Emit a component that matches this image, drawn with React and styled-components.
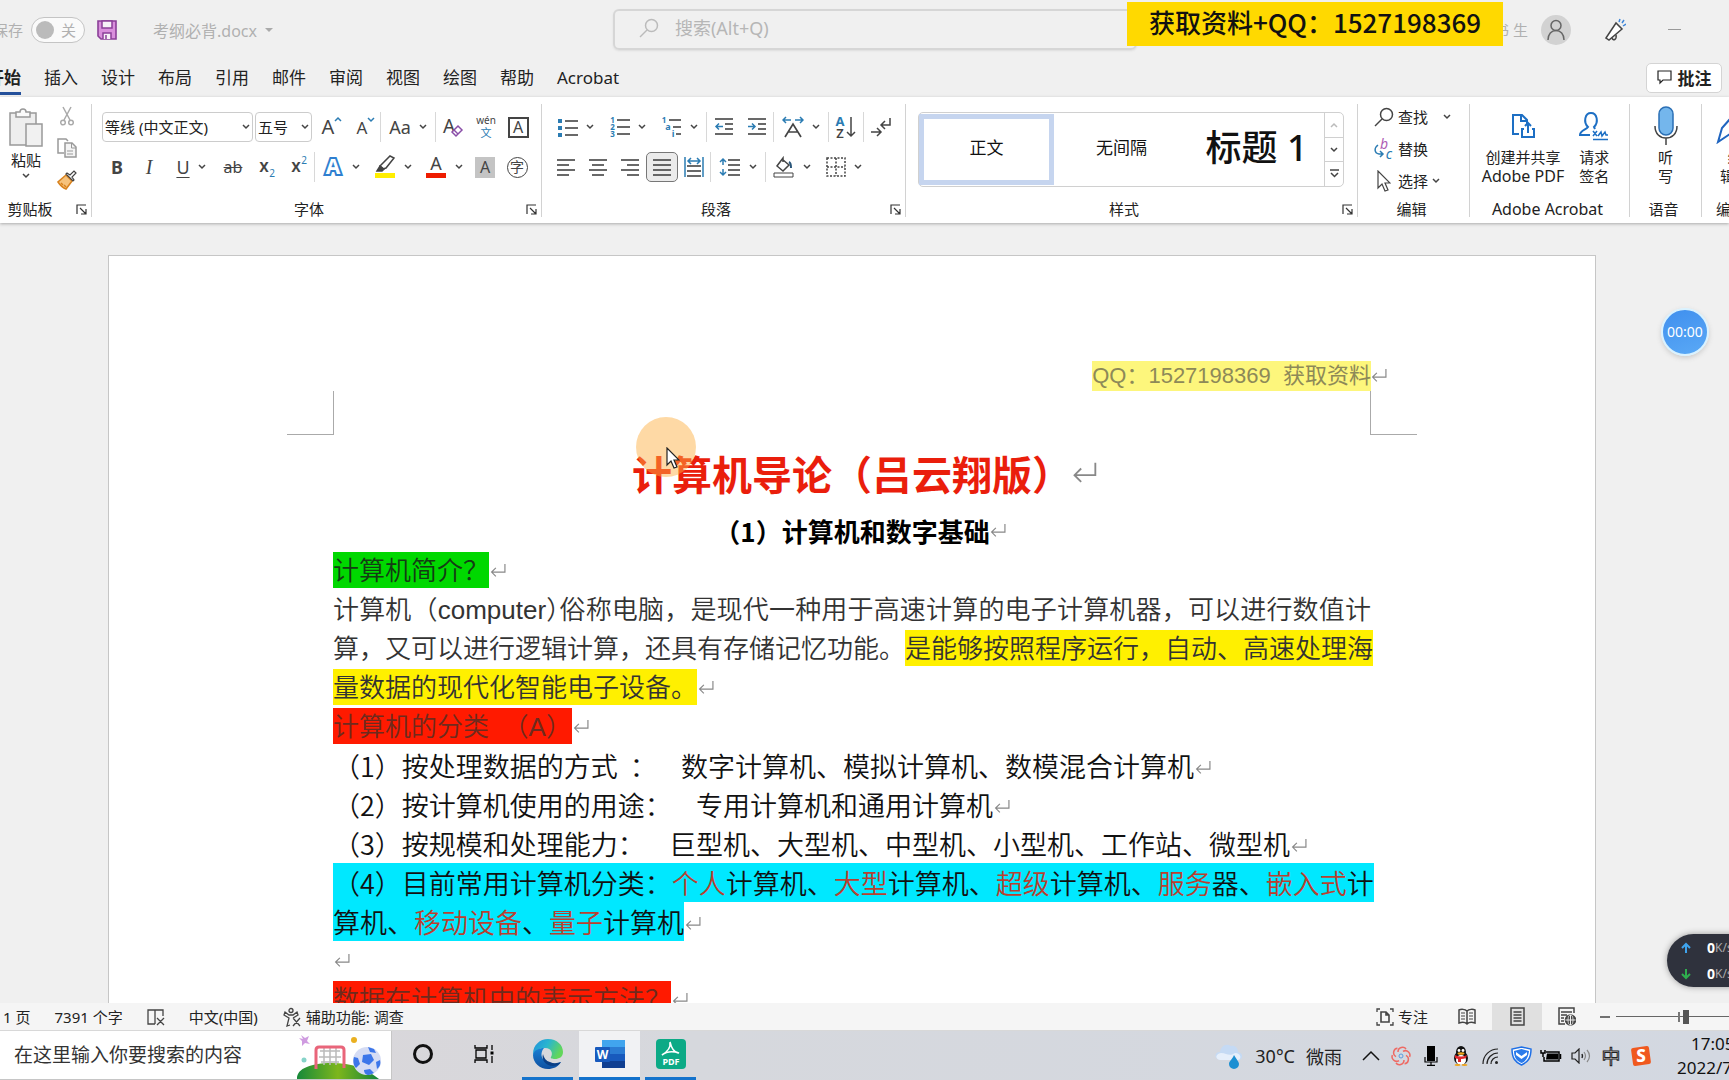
import styled, { createGlobalStyle, css } from "styled-components";

const UI_FONT = '"Noto Sans", "Noto Sans CJK SC", sans-serif';
const CJK_FONT = '"Noto Sans CJK SC", "Noto Sans", sans-serif';
const BLUE = "#2b7cb3";
const INK = "#444";

/* ---------- icons ---------- */

const Svg = ({ w = 20, h = 20, children }) => (
  <svg width={w} height={h} viewBox={`0 0 ${w} ${h}`} fill="none" stroke={INK} strokeWidth="1.5" aria-hidden="true">
    {children}
  </svg>
);

const Glyph = ({ x, y, size, fill = INK, weight = 400, children }) => (
  <text x={x} y={y} fontSize={size} fill={fill} stroke="none" fontWeight={weight} textAnchor="middle"
    fontFamily={UI_FONT}>{children}</text>
);

const Chevron = ({ up, color = INK }) => (
  <svg width="8" height="6" viewBox="0 0 8 6" fill="none" stroke={color} strokeWidth="1.5" aria-hidden="true">
    <path d={up ? "M1 5l3-3 3 3" : "M1 1l3 3 3-3"} />
  </svg>
);

const Enter = ({ big }) => (
  <svg width={big ? 25 : 16} height={big ? 25 : 16} viewBox="0 0 15 15" fill="none" stroke="#888" strokeWidth="1.1" aria-hidden="true">
    <path d="M14 1v7.5H1.5M5.5 4.5l-4 4 4 4" />
  </svg>
);

const SaveIcon = () => (
  <Svg w={20} h={20}>
    <path d="M1 1h18v18H4l-3-3z" fill="#d98fdc" stroke="#8a3f98" strokeWidth="1.6" />
    <path d="M5 1h10v7H5z" fill="#f6f0f7" stroke="#8a3f98" />
    <path d="M6 19v-6h8v6" fill="#f6f0f7" stroke="#8a3f98" />
    <path d="M9 15v4" stroke="#8a3f98" />
  </Svg>
);

const SearchIcon = ({ color = INK }) => (
  <Svg w={20} h={20}>
    <circle cx="12.5" cy="7.5" r="6" stroke={color} />
    <path d="M8 12l-7 7" stroke={color} />
  </Svg>
);

const PersonIcon = () => (
  <Svg w={20} h={22}>
    <circle cx="10" cy="6.5" r="5" stroke="#666" />
    <path d="M2 21c0-6 3.5-9.5 8-9.5s8 3.500 8 9.500" stroke="#666" />
  </Svg>
);

const MegaphoneIcon = () => (
  <Svg w={22} h={24}>
    <path d="M2 20L12 5l6 6-13 11-3-2z" fill="#fff" />
    <path d="M8 20c1 3 5 2 4-3" />
    <path d="M15 4l1-3M18 5l2-3M19 8l3-2" stroke="#3f86d8" />
  </Svg>
);

const CommentIcon = () => (
  <Svg w={15} h={15}><path d="M1 1h13v9H6l-3 3v-3H1z" stroke="#222" strokeWidth="1.2" /></Svg>
);

const PasteIcon = () => (
  <Svg w={36} h={40}>
    <path d="M2 6h26v32H2z" fill="#eee" stroke="#999" />
    <path d="M8 10V5h4c0-4 6-4 6 0h4v5z" fill="#fafafa" stroke="#999" />
    <path d="M18 17h16v22H18z" fill="#f1f1f1" stroke="#999" />
  </Svg>
);

const CutIcon = () => (
  <Svg w={14} h={20}>
    <path d="M3 1l7 13M11 1L4 14" stroke="#aaa" />
    <circle cx="3" cy="16.5" r="2.3" stroke="#aaa" />
    <circle cx="11" cy="16.5" r="2.3" stroke="#aaa" />
  </Svg>
);

const CopyIcon = () => (
  <Svg w={20} h={20}>
    <path d="M7 15H1V1h8l2 2" stroke="#999" />
    <path d="M8 5h7l4 4v10H8z" fill="#f4f4f4" stroke="#999" />
    <path d="M14.5 5v5H19M10 13h6M10 16h6" stroke="#999" strokeWidth="1" />
  </Svg>
);

const BrushIcon = () => (
  <Svg w={20} h={20}>
    <path d="M9 5L1 12c2 3 5 6 8 7l6-8z" fill="#f6c27c" stroke="#d8821e" />
    <path d="M4 13l2 2M7 15l2 2" stroke="#d8821e" />
    <path d="M9 4l7 7 1-1-2-3 4-4-2-2-4 4-3-2z" fill="#fff" stroke="#444" strokeWidth="1.2" />
  </Svg>
);

const Lines = ({ rows, stroke = INK }) => (
  <>{rows.map(([x1, x2, y]) => <path key={y} d={`M${x1} ${y}H${x2}`} stroke={stroke} strokeWidth="1.6" />)}</>
);

const BulletsIcon = () => (
  <Svg>
    {[2, 9, 16].map((y) => <rect key={y} x="0" y={y} width="4" height="4" fill={BLUE} stroke="none" />)}
    <Lines rows={[[7, 20, 4], [7, 20, 11], [7, 20, 18]]} />
  </Svg>
);

const NumberIcon = () => (
  <Svg>
    {[1, 2, 3].map((n) => <Glyph key={n} x={2.5} y={n * 7 - 1} size={8} fill={BLUE} weight={700}>{n}</Glyph>)}
    <Lines rows={[[7, 20, 3], [7, 20, 10], [7, 20, 17]]} />
  </Svg>
);

const MultiIcon = () => (
  <Svg w={20} h={22}>
    <Glyph x={2} y={7} size={8} fill={BLUE} weight={700}>1</Glyph>
    <Glyph x={6} y={14} size={9} fill={BLUE} weight={700}>a</Glyph>
    <Glyph x={11} y={21} size={9} fill={BLUE} weight={700}>i</Glyph>
    <Lines rows={[[7, 19, 4], [11, 19, 11], [14, 19, 18]]} />
  </Svg>
);

const IndentIcon = ({ out }) => (
  <Svg>
    <Lines rows={[[1, 19, 2], [11, 19, 7], [11, 19, 12], [1, 19, 17]]} />
    <path d={out ? "M9 9.5H2M5 6.5l-3 3 3 3" : "M1 9.5h7M5 6.5l3 3-3 3"} stroke={BLUE} />
  </Svg>
);

const alignRows = {
  left: [[1, 19, 2], [1, 13, 7], [1, 19, 12], [1, 13, 17]],
  center: [[1, 19, 2], [4, 16, 7], [1, 19, 12], [4, 16, 17]],
  right: [[1, 19, 2], [7, 19, 7], [1, 19, 12], [7, 19, 17]],
  justify: [[1, 19, 2], [1, 19, 7], [1, 19, 12], [1, 19, 17]],
};

const AlignIcon = ({ kind }) => <Svg h={19}><Lines rows={alignRows[kind]} /></Svg>;

const DistributeIcon = () => (
  <Svg w={20} h={22}>
    <path d="M1 1v20M19 1v20M4 5h12M7 2L4 5l3 3M13 2l3 3-3 3" stroke={BLUE} />
    <Lines rows={[[3, 17, 10], [3, 17, 15], [3, 17, 20]]} />
  </Svg>
);

const SpacingIcon = () => (
  <Svg w={22} h={20}>
    <path d="M4 2v6M1 5l3-3 3 3M4 12v6M1 15l3 3 3-3" stroke={BLUE} />
    <Lines rows={[[9, 21, 3], [9, 21, 8], [9, 21, 13], [9, 21, 18]]} />
  </Svg>
);

const WidthIcon = () => (
  <Svg w={22} h={22}>
    <path d="M9 4H1M4 1L1 4l3 3M13 4h8M18 1l3 3-3 3" stroke={BLUE} />
    <path d="M3 21L11 8l8 13M6 16h10" strokeWidth="1.7" />
  </Svg>
);

const SortIcon = () => (
  <Svg w={22} h={24}>
    <Glyph x={5} y={11} size={13} fill={BLUE} weight={700}>A</Glyph>
    <Glyph x={5} y={23} size={13} weight={600}>Z</Glyph>
    <path d="M16 2v19M12 17l4 4 4-4" />
  </Svg>
);

const MarksIcon = () => (
  <Svg w={22} h={20}>
    <path d="M20 1v7h-8M15 4l-4 4 4 4M1 15h9M7 11l4 4-4 4" />
  </Svg>
);

const BucketIcon = () => (
  <Svg w={22} h={22}>
    <path d="M9 3l7 6-6 6-6-5 6-8v4" />
    <path d="M16 6c2 1 2 4 2 6" stroke="#2a567a" strokeWidth="2" />
    <path d="M1 17h19v4H1z" strokeWidth="1" />
  </Svg>
);

const BordersIcon = () => (
  <Svg><path d="M1 1h18v18H1zM10 1v18M1 10h18" strokeDasharray="2 1.5" /></Svg>
);

const PenIcon = () => (
  <Svg w={22} h={24}>
    <path d="M6 11L16 1l4 2-8 10-3 1z" />
    <path d="M3 16l3-5 4 3-2 2z" fill={INK} />
    <path d="M1 18h20v5H1z" fill="#ffee00" stroke="none" />
  </Svg>
);

const FontColorIcon = () => (
  <Svg w={22} h={24}>
    <Glyph x={11} y={15} size={18}>A</Glyph>
    <path d="M1 18h20v5H1z" fill="#ee1c00" stroke="none" />
  </Svg>
);

const ClearIcon = () => (
  <Svg w={22} h={24}>
    <Glyph x={7} y={18} size={19}>A</Glyph>
    <path d="M10 17l6-6 4 4-6 6z" fill="#fff" stroke="#8a4fa8" />
    <path d="M12 15l4 4" stroke="#8a4fa8" />
  </Svg>
);

const PinyinIcon = () => (
  <Svg w={22} h={24}>
    <Glyph x={11} y={9} size={10}>wén</Glyph>
    <Glyph x={11} y={22} size={11} fill={BLUE}>文</Glyph>
  </Svg>
);

const EffectIcon = () => (
  <Svg w={22} h={24}>
    <text x="11" y="19" fontSize="21" fontWeight="700" textAnchor="middle" fontFamily={UI_FONT}
      stroke="#2f7fd0" strokeWidth="4" fill="#fff" paintOrder="stroke">A</text>
  </Svg>
);

const ReplaceIcon = () => (
  <Svg w={20} h={22}>
    <Glyph x={10} y={11} size={14} fill="#b05fb5">b</Glyph>
    <Glyph x={15} y={21} size={14} fill={BLUE}>c</Glyph>
    <path d="M4 7c-4 3-4 8 1 9h3M6 13l3 3-3 3" stroke={BLUE} />
  </Svg>
);

const PointerIcon = ({ color = INK }) => (
  <Svg w={14} h={22}><path d="M1 1v17l4-4 3 7 3-1-3-7h5z" fill="#fff" stroke={color} strokeWidth="1.2" /></Svg>
);

const PdfShareIcon = () => (
  <Svg w={24} h={26}>
    <path d="M8 21H2V2h9l5 5v4M10 2v6h6" stroke="#1d6fc4" strokeWidth="2" />
    <path d="M13 16h-2v8h12v-8h-2M17 20v-9M14 13l3-3 3 3" stroke="#1d6fc4" strokeWidth="2" />
  </Svg>
);

const SignIcon = () => (
  <Svg w={30} h={30}>
    <path d="M11 24H1c0-5 6-5 8-8-5-5-3-14 3-14s8 9 3 14l1 2" stroke="#1d6fc4" strokeWidth="2" />
    <path d="M14 20l4 5M18 20l-4 5M19 25l3-4 1 4 3-4 1 3h2M14 28.5h15" stroke="#1d6fc4" strokeWidth="1.5" />
  </Svg>
);

const MicIcon = () => (
  <Svg w={24} h={40}>
    <rect x="5" y="1" width="14" height="28" rx="7" fill="#74b6ec" stroke="#2a6fb5" />
    <path d="M1 20c0 8 5 12 11 12s11-4 11-12M12 32v7" />
  </Svg>
);

const EditorIcon = () => (
  <Svg w={38} h={36}><path d="M2 34l4-14L22 2l6 4-14 20z" stroke="#2065c0" strokeWidth="2" /></Svg>
);

const LauncherIcon = () => (
  <Svg w={11} h={11}><path d="M1 10V1h9M4 4l6 6M10 5v5H5" stroke="#333" strokeWidth="1.2" /></Svg>
);

const ProofIcon = () => (
  <Svg w={18} h={18}>
    <path d="M8 16V2H1v14h7M8 2h8v6M16 2v6M10 10l7 7M17 10l-7 7" strokeWidth="1.3" />
  </Svg>
);

const AccessIcon = () => (
  <Svg w={20} h={20}>
    <circle cx="9" cy="3.5" r="2" strokeWidth="1.3" />
    <path d="M8 18l-3 1 2-8-5-3 1-3 4 3h4l4-3 1 3-5 3M11 11l7 8M18 11l-7 8" strokeWidth="1.3" />
  </Svg>
);

const FocusIcon = () => (
  <Svg w={18} h={18}>
    <path d="M4 1H1v3M14 1h3v3M4 17H1v-3M14 17h3v-3" strokeWidth="1.3" />
    <path d="M5 4h5l3 3v7H5zM10 4v3h3" strokeWidth="1.6" />
  </Svg>
);

const ReadIcon = () => (
  <Svg w={18} h={18}>
    <path d="M9 3v13M9 3C7 1 3 1 1 2v13c3-1 6-1 8 1 2-2 5-2 8-1V2c-2-1-6-1-8 1" />
    <path d="M3 5h4M3 8h4M3 11h4M11 5h4M11 8h4M11 11h4" strokeWidth="1.2" />
  </Svg>
);

const PrintIcon = () => (
  <Svg w={15} h={19}>
    <path d="M1 1h13v17H1z" />
    <path d="M3.500 5h8M3.500 8h8M3.500 11h8M3.500 14h8" strokeWidth="1.3" />
  </Svg>
);

const WebIcon = () => (
  <Svg w={18} h={19}>
    <path d="M7 17H1V1h15v5M3 5h11M3 8h6M3 11h3M3 14h3" />
    <circle cx="12.5" cy="13" r="5" fill="#444" />
    <path d="M7.5 13h10M12.5 8v10" stroke="#eee" strokeWidth="1" />
    <ellipse cx="12.5" cy="13" rx="2.5" ry="5" stroke="#eee" strokeWidth=".8" />
  </Svg>
);

const SoccerArt = () => (
  <svg width="98" height="48" viewBox="0 0 98 48" aria-hidden="true">
    <defs>
      <linearGradient id="hill"><stop offset="0" stopColor="#16893a" /><stop offset=".5" stopColor="#7db61c" /><stop offset="1" stopColor="#128338" /></linearGradient>
    </defs>
    <path d="M8 4l4 3 4-2-2 5 3 3-5-1-3 3v-5l-3-3 4 1z" fill="#cf9be0" />
    <circle cx="61" cy="9" r="3" fill="#eab020" />
    <circle cx="11" cy="29" r="2.5" fill="#86d3c9" />
    <path d="M4 48c-1-11 16-16 34-16 22 0 34 5 48 16z" fill="url(#hill)" />
    <path d="M27 20h20M26 26h22M28 31h18M31 17v17M37 17v17M43 17v17" stroke="#bbb" strokeWidth="1.5" />
    <path d="M23 38V19q0-3 3-3h22q3 0 3 3v18" fill="none" stroke="#e9657a" strokeWidth="3" />
    <circle cx="74" cy="30" r="14" fill="#d5dcf4" />
    <path d="M70 24l8-1 3 6-5 5-7-3zM61 26l4 1 2 6-4 4c-3-3-3-8-2-11zM75 16l6 2 2 4-6-1zM71 39l6-1 4 4-5 2c-3 0-5-2-5-5zM83 31l4-2c1 4 0 7-3 9z" fill="#3c76ea" />
  </svg>
);

const EdgeLogo = () => (
  <svg width="32" height="32" viewBox="0 0 32 32" aria-hidden="true">
    <defs>
      <linearGradient id="edgeTop" x1="0" y1="0" x2="1" y2=".4"><stop offset="0" stopColor="#1f8fdc" /><stop offset=".5" stopColor="#2ab5d0" /><stop offset="1" stopColor="#62d65b" /></linearGradient>
      <linearGradient id="edgeLow" x1="0" y1="0" x2="0" y2="1"><stop offset="0" stopColor="#1a7fd4" /><stop offset="1" stopColor="#0d4fa0" /></linearGradient>
    </defs>
    <path d="M1 16C1 7 8 1 16 1c9 0 15 6 15 13 0 5-4 7-8 7-3 0-5-1-4-2 2-3 1-9-6-9C7 10 2 13 1 18z" fill="url(#edgeTop)" />
    <path d="M1 17C2 12 7 10 12 10c-3 3-5 12 5 15 5 2 9 0 12-1-3 5-8 7-13 7C8 31 1 25 1 17z" fill="url(#edgeLow)" />
    <path d="M11 16c-2 6 3 12 10 12 3 0 6-1 8-4-3 1-7 2-11 0-4-1-6-4-7-8z" fill="#0a3f86" />
  </svg>
);

const WordLogo = () => (
  <svg width="30" height="30" viewBox="0 0 30 30" aria-hidden="true">
    <path d="M7 1h23v7H7z" fill="#41a5ee" />
    <path d="M7 8h23v7H7z" fill="#2b7cd3" />
    <path d="M7 15h23v7H7z" fill="#185abd" />
    <path d="M7 22h23v7H7z" fill="#103f91" />
    <rect x="0" y="8" width="15" height="15" rx="1" fill="#185abd" />
    <text x="7.5" y="20" fontSize="12" fontWeight="700" fill="#fff" textAnchor="middle" fontFamily={UI_FONT}>W</text>
  </svg>
);

const PdfLogo = () => (
  <svg width="30" height="30" viewBox="0 0 30 30" aria-hidden="true">
    <rect width="30" height="30" rx="4" fill="#0caa86" />
    <path d="M14 3c1 6-3 10-8 13 5-4 11-4 17-2-5 0-8-6-9-11z" fill="none" stroke="#fff" strokeWidth="1.6" />
    <text x="15" y="26" fontSize="9" fontWeight="700" fill="#fff" textAnchor="middle" fontFamily={UI_FONT}>PDF</text>
  </svg>
);

const TaskViewIcon = () => (
  <Svg w={20} h={20}>
    <path d="M1 1v3h12V1M1 19v-3h12v3M2 6h10v8H2zM18 1v5M18 12v7" stroke="#000" strokeWidth="1.3" />
    <path d="M16.5 7.5h3v3h-3z" fill="#000" stroke="none" />
  </Svg>
);

const WeatherIcon = () => (
  <svg width="30" height="30" viewBox="0 0 30 30" aria-hidden="true">
    <path d="M6 19c-6-1-6-8 0-8 1-6 6-9 11-6 4-1 7 2 7 6 6 1 5 8 0 8z" fill="#c5daf4" />
    <path d="M6 19c-5-1-5-6 1-7 6 0 8 4 14 0 6 0 7 6 3 7z" fill="#e6effb" />
    <path d="M20 14c3 5 5 7 5 9a5 5 0 0 1-10 0c0-3 3-4 5-9z" fill="#1c8fd2" />
  </svg>
);

const SwirlIcon = () => (
  <Svg w={20} h={20}>
    {[0, 60, 120, 180, 240, 300].map((a) => (
      <path key={a} d="M7 6c0-5 6-6 8-3" stroke="#ee6a64" transform={`rotate(${a} 10 10)`} />
    ))}
    <circle cx="10" cy="10" r="2" stroke="#5a9be0" strokeWidth="1" />
  </Svg>
);

const TrayMic = () => (
  <Svg w={14} h={20}>
    <rect x="3" y="0" width="8" height="15" fill="#000" stroke="none" />
    <path d="M1 11v5h12v-5M7 16v4M3 19.3h8" stroke="#000" strokeWidth="1.2" />
  </Svg>
);

const PenguinIcon = () => (
  <svg width="18" height="20" viewBox="0 0 18 20" aria-hidden="true">
    <ellipse cx="9" cy="12" rx="7" ry="7" fill="#111" />
    <ellipse cx="9" cy="6" rx="5" ry="6" fill="#111" />
    <ellipse cx="9" cy="14" rx="5" ry="5" fill="#fff" />
    <circle cx="7" cy="4.5" r="1.4" fill="#fff" /><circle cx="11" cy="4.5" r="1.4" fill="#fff" />
    <ellipse cx="9" cy="7.5" rx="3.5" ry="1.3" fill="#f0a51e" />
    <path d="M3 9q6 3 12 0l-1 3q-2 1-5 1v3H6v-3l-3-1z" fill="#e0252b" />
    <ellipse cx="5.5" cy="19" rx="3" ry="1" fill="#f0a51e" /><ellipse cx="12.5" cy="19" rx="3" ry="1" fill="#f0a51e" />
  </svg>
);

const WifiIcon = () => (
  <Svg w={18} h={18}>
    <path d="M1 17C1 8 8 2 16 2M5 17c0-6 5-11 11-11M9 17c0-4 3-7 7-7" stroke="#222" strokeWidth="1.2" />
    <circle cx="14.5" cy="15.5" r="1.5" fill="#222" stroke="none" />
  </Svg>
);

const ShieldIcon = () => (
  <svg width="21" height="20" viewBox="0 0 21 20" aria-hidden="true">
    <path d="M10.5 1L20 3c0 9-3 13-9.5 16C4 16 1 12 1 3z" fill="#fff" stroke="#1e6fe6" strokeWidth="1.5" />
    <path d="M10.5 3L18 5c-1 7-3 10-7.5 12C6 15 3 12 3 5z" fill="#2b7bea" />
    <path d="M5 6l5.500 4L16 6v3l-5.500 4L5 9z" fill="#fff" />
  </svg>
);

const BatteryIcon = () => (
  <Svg w={22} h={14}>
    <path d="M6 3h13v9H4V8" stroke="#000" />
    <path d="M7 4.5h11v6H6z" fill="#000" stroke="none" />
    <path d="M20.5 5v5M1 1v3h4V1M3 4v4" stroke="#000" />
  </Svg>
);

const SpeakerIcon = () => (
  <Svg w={20} h={16}>
    <path d="M1 5h3l4-4v14l-4-4H1z" stroke="#222" strokeWidth="1.2" />
    <path d="M11 6q1 2 0 4" stroke="#222" /><path d="M13 4q3 4 0 8M16 2q5 6 0 12" stroke="#888" strokeWidth="1.2" />
  </Svg>
);

const SogouIcon = () => (
  <svg width="22" height="22" viewBox="0 0 22 22" aria-hidden="true">
    <rect x="2" y="2" width="18" height="18" rx="2" fill="#f0591e" transform="rotate(-8 11 11)" />
    <text x="11" y="17" fontSize="17" fontWeight="800" fill="#fff" textAnchor="middle" fontFamily={UI_FONT}>S</text>
  </svg>
);

/* ---------- shell ---------- */

const GlobalStyle = createGlobalStyle`
  * { box-sizing: border-box; }
  body { margin: 0; overflow: hidden; font-family: ${UI_FONT}; color: #222; }
  button, input, select { font: inherit; color: inherit; }
  svg { display: block; flex: none; }
`;

const Window = styled.div`
  display: flex;
  flex-direction: column;
  height: 100vh;
  background: #f0f0f0;
  position: relative;
  overflow: hidden;
`;

const TitleBar = styled.header`
  display: flex;
  align-items: center;
  height: 56px;
  padding-top: 3px;
  color: #b0b0b0;
  font-size: 15px;
  white-space: nowrap;
`;

const AutoSave = styled.label`
  display: flex;
  align-items: center;
  gap: 8px;
  margin-left: -37px;
`;

const Switch = styled.span`
  display: flex;
  align-items: center;
  justify-content: space-between;
  width: 54px;
  height: 26px;
  padding: 0 8px 0 4px;
  border: 1px solid #c4c4c4;
  border-radius: 13px;
  background: #fafafa;
  &::before {
    content: "";
    width: 18px;
    height: 18px;
    border-radius: 50%;
    background: #bbb;
  }
`;

const HiddenCheck = styled.input`
  position: absolute;
  opacity: 0;
`;

const PlainButton = styled.button`
  display: flex;
  align-items: center;
  justify-content: center;
  gap: 8px;
  padding: 0;
  border: 0;
  background: none;
  white-space: nowrap;
`;

const SaveButton = styled(PlainButton)`
  margin-left: 12px;
`;

const FileName = styled(PlainButton)`
  margin-left: 36px;
  font-size: 16px;
`;

const Caret = styled.span`
  border: 4px solid transparent;
  border-top-color: #aaa;
  border-bottom: 0;
`;

const SearchBox = styled.label`
  display: flex;
  align-items: center;
  gap: 14px;
  flex: 1;
  height: 41px;
  margin-left: 340px;
  padding: 0 0 3px 24px;
  border: 2px solid #d6d6d6;
  border-radius: 6px;
  box-shadow: 0 1px 2px #ddd;
  input {
    flex: 1;
    min-width: 0;
    border: 0;
    background: none;
    outline: none;
    font-size: 18px;
  }
  input::placeholder {
    color: #b6b6b6;
    opacity: 1;
  }
`;

const Account = styled.div`
  display: flex;
  align-items: center;
  justify-content: flex-end;
  gap: 13px;
  width: 592px;
  overflow: hidden;
`;

const Avatar = styled.span`
  display: flex;
  align-items: center;
  justify-content: center;
  width: 30px;
  height: 30px;
  border-radius: 50%;
  background: #d2d2d2;
`;

const Megaphone = styled(PlainButton)`
  margin-left: 20px;
`;

const WindowButton = styled(PlainButton)`
  width: 50px;
  margin: 0 30px 0 10px;
  span {
    width: 13px;
    height: 1px;
    background: #999;
  }
`;

const Banner = styled.div`
  position: absolute;
  z-index: 3;
  top: 2px;
  right: 226px;
  width: 376px;
  height: 44px;
  background: #ffd900;
  color: #111;
  font: 500 26px/40px ${CJK_FONT};
  text-align: center;
  white-space: nowrap;
`;

const TabBar = styled.nav`
  display: flex;
  align-items: center;
  gap: 23px;
  height: 41px;
  margin-left: -13px;
  padding-right: 7px;
  font-size: 17px;
  white-space: nowrap;
`;

const Tab = styled.button`
  height: 36px;
  padding: 4px 0 0;
  border: 0;
  border-bottom: 3px solid ${({ $active }) => ($active ? "#24509b" : "transparent")};
  background: none;
  line-height: 29px;
  font-weight: ${({ $active }) => ($active ? 700 : 400)};
`;

const CommentButton = styled(PlainButton)`
  width: 76px;
  height: 30px;
  margin: 2px 0 0 auto;
  gap: 6px;
  border: 1px solid #d4d4d4;
  border-radius: 5px;
  background: #fff;
  font-weight: 700;
`;

/* ---------- ribbon ---------- */

const Ribbon = styled.div`
  display: flex;
  height: 126px;
  padding: 7px 0 6px;
  flex: none;
  background: #fff;
  box-shadow: 0 1px 3px #aaa;
  font-size: 15px;
  white-space: nowrap;
  position: relative;
`;

const Group = styled.section`
  display: flex;
  flex-direction: column;
  flex: ${({ $w }) => ($w ? `0 0 ${$w}px` : "1")};
  min-width: 0;
  border-right: 1px solid #d2d2d2;
`;

/* the first group starts left of the window edge */
const FirstGroup = styled(Group)`
  margin-left: -16px;
`;

const GroupBody = styled.div`
  display: flex;
  flex-direction: column;
  flex: 1;
  padding: ${({ $pad }) => $pad || "0"};
  gap: 6px;
`;

const GroupFoot = styled.div`
  display: flex;
  align-items: center;
  height: 22px;
  padding: 6px 4px 0 0;
  font-size: ${({ $latin }) => ($latin ? 16 : 15)}px;
  line-height: 16px;
  > span {
    flex: 1;
    text-align: center;
  }
`;

const Foot = ({ label, launcher = true, latin }) => (
  <GroupFoot $latin={latin}>
    <span>{label}</span>
    {launcher && <PlainButton aria-label={`${label}设置`}><LauncherIcon /></PlainButton>}
  </GroupFoot>
);

const Row = styled.div`
  display: flex;
  align-items: center;
  height: 34px;
`;

const Tool = styled.button`
  display: flex;
  align-items: center;
  justify-content: center;
  gap: 8px;
  width: ${({ $w }) => $w || 32}px;
  height: 30px;
  padding: 0;
  border: ${({ $on }) => ($on ? "1px solid #777" : "0")};
  border-radius: 5px;
  background: ${({ $on }) => ($on ? "#ebebeb" : "none")};
  color: ${INK};
  font-size: 18px;
  line-height: 24px;
`;

const Rule = styled.span`
  width: 1px;
  height: 30px;
  background: #d8d8d8;
`;

const Picker = styled.div`
  display: flex;
  align-items: center;
  width: ${({ $w }) => $w}px;
  height: 30px;
  margin-right: 2px;
  padding: 0 2px;
  border: 1px solid #ccc;
  border-radius: 4px;
  select {
    flex: 1;
    min-width: 0;
    padding: 0;
    border: 0;
    background: none;
    appearance: none;
    outline: none;
  }
`;

const Letter = styled.span`
  ${({ $bold }) => $bold && css`font-weight: 700;`}
  ${({ $italic }) => $italic && css`font-family: "Liberation Serif", serif; font-style: italic; font-size: 20px;`}
  ${({ $under }) => $under && css`text-decoration: underline; text-underline-offset: 3px;`}
  ${({ $strike }) => $strike && css`text-decoration: line-through; font-size: 16px;`}
`;

const Grey = styled.span`
  width: 20px;
  height: 21px;
  background: #c4c4c4;
  line-height: 21px;
  font-size: 16px;
`;

const Framed = styled.span`
  width: 21px;
  height: 21px;
  border: ${({ $round }) => ($round ? 1 : 2)}px solid #444;
  border-radius: ${({ $round }) => ($round ? "50%" : "0")};
  line-height: ${({ $round }) => ($round ? 18 : 17)}px;
  font-size: ${({ $round }) => ($round ? 14 : 16)}px;
`;

const ClipBody = styled.div`
  display: flex;
  flex: 1;
  padding: 2px 14px 0 24px;
  justify-content: space-between;
`;

const PasteButton = styled.button`
  display: flex;
  flex-direction: column;
  align-items: center;
  gap: 3px;
  padding: 1px 0 0;
  border: 0;
  background: none;
  line-height: 20px;
`;

const ClipSide = styled.div`
  display: flex;
  flex-direction: column;
  align-items: center;
  gap: 12px;
`;

const Gallery = styled.div`
  display: flex;
  height: 75px;
  margin: 8px 13px 0 12px;
  border: 1px solid #d0d0d0;
  border-radius: 5px;
`;

const StyleCard = styled.button`
  flex: 1;
  min-width: 0;
  margin: 1px 0;
  padding: 0 0 4px;
  border: 5px solid ${({ $on }) => ($on ? "#c6d5ef" : "transparent")};
  background: none;
  color: #111;
  font-size: ${({ $big }) => ($big ? 36 : 17)}px;
  font-weight: ${({ $big }) => ($big ? 500 : 400)};
  line-height: 40px;
  white-space: nowrap;
`;

const GallerySteps = styled.div`
  display: flex;
  flex-direction: column;
  width: 19px;
  border-left: 1px solid #d0d0d0;
  button { flex: 1; }
  button + button { border-top: 1px solid #d0d0d0; }
`;

const EditList = styled.div`
  display: flex;
  flex-direction: column;
  flex: 1;
  gap: 6px;
`;

const EditRow = styled.button`
  display: flex;
  align-items: center;
  height: 26px;
  padding: 0 0 0 16px;
  border: 0;
  background: none;
  line-height: 22px;
  > span { margin-right: ${({ $gap }) => $gap || 0}px; }
`;

const EditIcon = styled.i`
  display: flex;
  justify-content: center;
  width: 20px;
  margin-right: 4px;
`;

const BigTools = styled.div`
  display: flex;
  flex: 1;
  justify-content: center;
  gap: 15px;
  padding-right: ${({ $shift }) => $shift || 0}px;
`;

const BigTool = styled.button`
  display: flex;
  flex-direction: column;
  align-items: center;
  padding: 0;
  border: 0;
  background: none;
  line-height: 19px;
  > span:first-child {
    display: flex;
    align-items: center;
    height: 44px;
  }
  em {
    font-style: normal;
    font-size: 16px;
  }
`;

const LastGroup = styled.section`
  display: flex;
  flex-direction: column;
  flex: 0 0 27px;
  align-items: flex-start;
  justify-content: space-between;
  min-width: 0;
  padding-left: 14px;
  overflow: hidden;
  line-height: 16px;
`;

/* ---------- document ---------- */

const Canvas = styled.main`
  display: flex;
  flex: 1;
  min-height: 0;
  padding: 32px 133px 0 108px;
  overflow: hidden;
`;

const Page = styled.article`
  flex: 1;
  min-width: 0;
  padding: 105px 224px 0;
  border: 1px solid #c6c6c6;
  border-bottom: 0;
  background: #fff;
  font-family: ${CJK_FONT};
  white-space: pre;
`;

const PageHeader = styled.div`
  display: flex;
  align-items: center;
  justify-content: flex-end;
  height: 30px;
  margin-right: -16px;
  font: 22px/30px "Liberation Sans", "Noto Sans CJK SC", sans-serif;
  mark {
    background: #fdf67c;
    color: #8d8958;
    line-height: 30px;
  }
`;

const Corners = styled.div`
  display: flex;
  justify-content: space-between;
  height: 44px;
  margin: 0 -46px;
  &::before,
  &::after {
    content: "";
    width: 46px;
    border-bottom: 1px solid #aaa;
  }
  &::before { border-right: 1px solid #aaa; }
  &::after { border-left: 1px solid #aaa; }
`;

const Title = styled.h1`
  display: flex;
  justify-content: center;
  align-items: center;
  height: 76px;
  margin: 0;
  color: #ea1e0c;
  font-size: 40px;
  font-weight: 700;
  line-height: 60px;
  svg { margin-right: -25px; }
`;

const Subtitle = styled.h2`
  display: flex;
  justify-content: center;
  align-items: center;
  height: 40px;
  margin: 0;
  color: #000;
  font-size: 26px;
  font-weight: 700;
  line-height: 36px;
  svg { margin-right: -16px; }
`;

const Line = styled.p`
  height: 39px;
  margin: 0;
  color: ${({ $large }) => ($large ? "#111" : "#333")};
  font-family: ${({ $large }) => ($large ? CJK_FONT : UI_FONT)};
  font-size: ${({ $large }) => ($large ? 27 : 26)}px;
  font-weight: 350;
  line-height: 39px;
  ${({ $full }) => $full && css`
    white-space: normal;
    text-align: justify;
    text-align-last: justify;
  `}
  svg {
    display: inline-block;
    margin-left: 1px;
    vertical-align: 1px;
  }
`;

const Mark = styled.mark`
  background: ${({ $bg }) => $bg};
  color: ${({ $color }) => $color || "inherit"};
`;

const Latin = styled.span`
  font-family: "Liberation Sans", sans-serif;
  line-height: 0;
`;

const Narrow = styled.span`
  font-family: ${CJK_FONT};
  font-feature-settings: "halt";
  line-height: 0;
`;

const Red = styled.span`
  color: #b9402f;
`;

/* ---------- floating items ---------- */

const ClickHalo = styled.div`
  position: absolute;
  z-index: 2;
  left: 636px;
  top: 417px;
  width: 60px;
  height: 60px;
  padding: 30px 0 0 30px;
  border-radius: 50%;
  background: rgba(252, 176, 66, 0.48);
`;

const Timer = styled.div`
  position: absolute;
  right: 20px;
  top: 308px;
  width: 48px;
  height: 48px;
  border: 2px solid #d9f2ff;
  border-radius: 50%;
  background: linear-gradient(160deg, #3f8fee, #5aa9f6);
  box-shadow: 0 2px 5px #ccc;
  color: #fff;
  font-size: 14px;
  line-height: 44px;
  text-align: center;
`;

const NetMeter = styled.div`
  position: absolute;
  right: -30px;
  bottom: 93px;
  display: flex;
  flex-direction: column;
  justify-content: center;
  gap: 6px;
  width: 92px;
  height: 53px;
  padding-left: 14px;
  border-radius: 27px;
  background: #2f323d;
  box-shadow: 0 0 6px #999;
  color: #aaa;
  font-size: 12px;
  line-height: 20px;
  div {
    display: flex;
    align-items: center;
  }
  b {
    margin-left: 16px;
    color: #fff;
    font-size: 14px;
  }
`;

/* ---------- bottom bars ---------- */

const StatusBar = styled.footer`
  display: flex;
  align-items: center;
  height: 28px;
  flex: none;
  padding-left: 3px;
  background: #f5f5f5;
  border-bottom: 1px solid #d8d8d8;
  font-size: 15px;
  white-space: nowrap;
`;

const StatusItem = styled.button`
  display: flex;
  align-items: center;
  gap: 4px;
  height: 27px;
  margin-right: ${({ $gap }) => $gap ?? 24}px;
  padding: 0;
  border: 0;
  background: none;
`;

const StatusRight = styled.div`
  display: flex;
  align-items: center;
  margin-left: auto;
`;

const ViewButton = styled(PlainButton)`
  width: 50px;
  height: 27px;
  background: ${({ $on }) => ($on ? "#e0e0e0" : "none")};
`;

const ZoomSlider = styled.input`
  appearance: none;
  width: 140px;
  height: 14px;
  margin: 0 -27px 0 0;
  background: linear-gradient(#666, #666) center / 100% 1px no-repeat;
  &::-webkit-slider-thumb {
    appearance: none;
    width: 6px;
    height: 14px;
    background: #555;
    box-shadow: -7px 0 0 -2px #777;
  }
`;

const TaskBar = styled.footer`
  display: flex;
  height: 49px;
  flex: none;
  background: linear-gradient(90deg, #dcd6d8, #d6d8dd 40%, #d3d8e1);
  white-space: nowrap;
`;

const TaskSearch = styled.label`
  display: flex;
  align-items: center;
  width: 392px;
  padding: 0 0 0 12px;
  border: solid #c6c6c6;
  border-width: 0 1px 1px 0;
  background: #fff;
  input {
    flex: 1;
    min-width: 0;
    border: 0;
    outline: none;
    font-size: 19px;
  }
  input::placeholder {
    color: #333;
    opacity: 1;
  }
`;

const TaskButton = styled.button`
  display: flex;
  align-items: center;
  justify-content: center;
  width: ${({ $w }) => $w || 61}px;
  padding: 0;
  border: 0;
  border-bottom: 3px solid ${({ $open }) => ($open ? "#1473cc" : "transparent")};
  margin-right: ${({ $gap }) => $gap || 0}px;
  background: ${({ $front }) => ($front ? "#f1f2f4" : "none")};
`;

const Ring = styled.span`
  width: 20px;
  height: 20px;
  border: 3px solid #111;
  border-radius: 50%;
`;

const Tray = styled.div`
  display: flex;
  align-items: center;
  margin-left: auto;
  font-size: 18px;
`;

const TrayButton = styled(PlainButton)`
  width: 30px;
  height: 30px;
`;

const Weather = styled(PlainButton)`
  gap: 11px;
  margin-right: 14px;
`;

const ImeMark = styled.span`
  color: #eee;
  font-size: 19px;
  -webkit-text-stroke: 1px #222;
`;

const Clock = styled.time`
  width: 52px;
  margin-left: 21px;
  color: #111;
  font-size: 17px;
  line-height: 24px;
  span {
    display: block;
    padding-left: 14px;
  }
`;

const tabs = ["开始", "插入", "设计", "布局", "引用", "邮件", "审阅", "视图", "绘图", "帮助", "Acrobat"];

const Header = () => (
  <>
    <TitleBar>
      <AutoSave>
        自动保存
        <HiddenCheck type="checkbox" />
        <Switch>关</Switch>
      </AutoSave>
      <SaveButton aria-label="保存"><SaveIcon /></SaveButton>
      <FileName>考纲必背.docx <Caret /></FileName>
      <SearchBox>
        <SearchIcon color="#bbb" />
        <input type="search" placeholder="搜索(Alt+Q)" aria-label="搜索" />
      </SearchBox>
      <Account>
        <span>书 生</span>
        <Avatar><PersonIcon /></Avatar>
        <Megaphone aria-label="即将推出"><MegaphoneIcon /></Megaphone>
        <WindowButton aria-label="最小化"><span /></WindowButton>
      </Account>
    </TitleBar>
    <TabBar>
      {tabs.map((tab, i) => <Tab key={tab} $active={i === 0}>{tab}</Tab>)}
      <CommentButton><CommentIcon />批注</CommentButton>
    </TabBar>
  </>
);

const ClipboardGroup = () => (
  <FirstGroup $w={108}>
    <ClipBody>
      <PasteButton><PasteIcon /><span>粘贴</span><Chevron /></PasteButton>
      <ClipSide>
        <PlainButton aria-label="剪切"><CutIcon /></PlainButton>
        <PlainButton aria-label="复制"><CopyIcon /></PlainButton>
        <PlainButton aria-label="格式刷"><BrushIcon /></PlainButton>
      </ClipSide>
    </ClipBody>
    <Foot label="剪贴板" />
  </FirstGroup>
);

const FontGroup = () => (
  <Group $w={450}>
    <GroupBody $pad="6px 0 0 10px">
      <Row>
        <Picker $w={151}>
          <select aria-label="字体"><option>等线 (中文正文)</option></select><Chevron />
        </Picker>
        <Picker $w={57}>
          <select aria-label="字号"><option>五号</option></select><Chevron />
        </Picker>
        <Tool $w={34} aria-label="增大字号">
          <Svg w={22} h={24}><Glyph x={8} y={19} size={20}>A</Glyph><path d="M15 6l3-3 3 3" stroke={BLUE} /></Svg>
        </Tool>
        <Tool aria-label="减小字号">
          <Svg w={22} h={24}><Glyph x={9} y={19} size={17}>A</Glyph><path d="M15 3l3 3 3-3" stroke={BLUE} /></Svg>
        </Tool>
        <Rule />
        <Tool $w={54} aria-label="更改大小写"><span>Aa</span><Chevron /></Tool>
        <Rule />
        <Tool $w={34} aria-label="清除格式"><ClearIcon /></Tool>
        <Tool aria-label="拼音指南"><PinyinIcon /></Tool>
        <Tool aria-label="字符边框"><Framed>A</Framed></Tool>
      </Row>
      <Row>
        <Tool $w={30} aria-label="加粗"><Letter $bold>B</Letter></Tool>
        <Tool $w={34} aria-label="倾斜"><Letter $italic>I</Letter></Tool>
        <Tool $w={50} aria-label="下划线"><Letter $under>U</Letter><Chevron /></Tool>
        <Tool $w={34} aria-label="删除线"><Letter $strike>ab</Letter></Tool>
        <Tool $w={34} aria-label="下标">
          <Svg w={18} h={24}><Glyph x={6} y={17} size={17} weight={600}>x</Glyph><Glyph x={14} y={22} size={10} fill={BLUE}>2</Glyph></Svg>
        </Tool>
        <Tool $w={30} aria-label="上标">
          <Svg w={18} h={24}><Glyph x={6} y={17} size={17} weight={600}>x</Glyph><Glyph x={14} y={9} size={10} fill={BLUE}>2</Glyph></Svg>
        </Tool>
        <Rule />
        <Tool $w={52} aria-label="文本效果"><EffectIcon /><Chevron /></Tool>
        <Tool $w={52} aria-label="突出显示"><PenIcon /><Chevron /></Tool>
        <Tool $w={50} aria-label="字体颜色"><FontColorIcon /><Chevron /></Tool>
        <Tool aria-label="字符底纹"><Grey>A</Grey></Tool>
        <Tool aria-label="带圈字符"><Framed $round>字</Framed></Tool>
      </Row>
    </GroupBody>
    <Foot label="字体" />
  </Group>
);

const ParagraphGroup = () => (
  <Group $w={364}>
    <GroupBody $pad="6px 0 0 8px">
      <Row>
        <Tool $w={52} aria-label="项目符号"><BulletsIcon /><Chevron /></Tool>
        <Tool $w={52} aria-label="编号"><NumberIcon /><Chevron /></Tool>
        <Tool $w={52} aria-label="多级列表"><MultiIcon /><Chevron /></Tool>
        <Rule />
        <Tool $w={34} aria-label="减少缩进"><IndentIcon out /></Tool>
        <Tool aria-label="增加缩进"><IndentIcon /></Tool>
        <Rule />
        <Tool $w={54} aria-label="中文版式"><WidthIcon /><Chevron /></Tool>
        <Rule />
        <Tool $w={34} aria-label="排序"><SortIcon /></Tool>
        <Rule />
        <Tool $w={34} aria-label="显示编辑标记"><MarksIcon /></Tool>
      </Row>
      <Row>
        <Tool aria-label="左对齐"><AlignIcon kind="left" /></Tool>
        <Tool aria-label="居中"><AlignIcon kind="center" /></Tool>
        <Tool aria-label="右对齐"><AlignIcon kind="right" /></Tool>
        <Tool $on aria-label="两端对齐"><AlignIcon kind="justify" /></Tool>
        <Tool aria-label="分散对齐"><DistributeIcon /></Tool>
        <Rule />
        <Tool $w={54} aria-label="行距"><SpacingIcon /><Chevron /></Tool>
        <Rule />
        <Tool $w={52} aria-label="底纹"><BucketIcon /><Chevron /></Tool>
        <Tool $w={52} aria-label="边框"><BordersIcon /><Chevron /></Tool>
      </Row>
    </GroupBody>
    <Foot label="段落" />
  </Group>
);

const StylesGroup = () => (
  <Group>
    <GroupBody>
      <Gallery>
        <StyleCard $on>正文</StyleCard>
        <StyleCard>无间隔</StyleCard>
        <StyleCard $big>标题 1</StyleCard>
        <GallerySteps>
          <PlainButton aria-label="上一行"><Chevron up color="#bbb" /></PlainButton>
          <PlainButton aria-label="下一行"><Chevron /></PlainButton>
          <PlainButton aria-label="其他">
            <Svg w={9} h={10}><path d="M0 1h9M1 4l3.500 3.500L8 4" /></Svg>
          </PlainButton>
        </GallerySteps>
      </Gallery>
    </GroupBody>
    <Foot label="样式" />
  </Group>
);

const RibbonBar = () => (
  <Ribbon>
    <ClipboardGroup />
    <FontGroup />
    <ParagraphGroup />
    <StylesGroup />
    <Group $w={112}>
      <EditList>
        <EditRow $gap={15}><EditIcon><SearchIcon /></EditIcon><span>查找</span><Chevron /></EditRow>
        <EditRow><EditIcon><ReplaceIcon /></EditIcon><span>替换</span></EditRow>
        <EditRow $gap={4}><EditIcon><PointerIcon /></EditIcon><span>选择</span><Chevron /></EditRow>
      </EditList>
      <Foot label="编辑" launcher={false} />
    </Group>
    <Group $w={160}>
      <BigTools $shift={8}>
        <BigTool><span><PdfShareIcon /></span><span>创建并共享</span><em>Adobe PDF</em></BigTool>
        <BigTool><span><SignIcon /></span><span>请求</span><span>签名</span></BigTool>
      </BigTools>
      <Foot label="Adobe Acrobat" launcher={false} latin />
    </Group>
    <Group $w={72}>
      <BigTools>
        <BigTool><span><MicIcon /></span><span>听</span><span>写</span></BigTool>
      </BigTools>
      <Foot label="语音" launcher={false} />
    </Group>
    <LastGroup>
      <BigTool><span><EditorIcon /></span><span>编</span><span>辑器</span></BigTool>
      <span>编辑器</span>
    </LastGroup>
  </Ribbon>
);

const Document = () => (
  <Canvas>
    <Page>
      <PageHeader><mark>QQ：1527198369  获取资料</mark><Enter /></PageHeader>
      <Corners />
      <Title>计算机导论（吕云翔版）<Enter big /></Title>
      <Subtitle>（1）计算机和数字基础<Enter /></Subtitle>
      <Line><Mark $bg="#00d800" $color="#143c14">计算机简介？</Mark><Enter /></Line>
      <Line $full>
        计算机（<Latin>computer</Latin><Narrow>）</Narrow>俗称电脑，是现代一种用于高速计算的电子计算机器，可以进行数值计
      </Line>
      <Line>算，又可以进行逻辑计算，还具有存储记忆功能。<Mark $bg="#fff000">是能够按照程序运行，自动、高速处理海</Mark></Line>
      <Line><Mark $bg="#fff000">量数据的现代化智能电子设备。</Mark><Enter /></Line>
      <Line><Mark $bg="#ff1a00" $color="#6e2a1e">计算机的分类  （<Latin>A</Latin>）</Mark><Enter /></Line>
      <Line $large>（1）按处理数据的方式  ：    数字计算机、模拟计算机、数模混合计算机<Enter /></Line>
      <Line $large>（2）按计算机使用的用途：    专用计算机和通用计算机<Enter /></Line>
      <Line $large>（3）按规模和处理能力：    巨型机、大型机、中型机、小型机、工作站、微型机<Enter /></Line>
      <Line $large>
        <Mark $bg="#00e8ff">（4）目前常用计算机分类：<Red>个人</Red>计算机、<Red>大型</Red>计算机、<Red>超级</Red>计算机、<Red>服务</Red>器、<Red>嵌入式</Red>计</Mark>
      </Line>
      <Line $large><Mark $bg="#00e8ff">算机、<Red>移动设备</Red>、<Red>量子</Red>计算机</Mark><Enter /></Line>
      <Line><Enter /></Line>
      <Line><Mark $bg="#ff1a00" $color="#6e2a1e">数据在计算机中的表示方法？</Mark><Enter /></Line>
    </Page>
  </Canvas>
);

const Status = () => (
  <StatusBar>
    <StatusItem>1 页</StatusItem>
    <StatusItem>7391 个字</StatusItem>
    <StatusItem aria-label="校对"><ProofIcon /></StatusItem>
    <StatusItem>中文(中国)</StatusItem>
    <StatusItem><AccessIcon />辅助功能: 调查</StatusItem>
    <StatusRight>
      <StatusItem $gap={14}><FocusIcon />专注</StatusItem>
      <ViewButton aria-label="阅读视图"><ReadIcon /></ViewButton>
      <ViewButton $on aria-label="页面视图"><PrintIcon /></ViewButton>
      <ViewButton aria-label="Web 版式"><WebIcon /></ViewButton>
      <PlainButton aria-label="缩小"><Svg w={24} h={10}><path d="M8 5h10" /></Svg></PlainButton>
      <ZoomSlider type="range" aria-label="缩放" defaultValue={50} />
    </StatusRight>
  </StatusBar>
);

const Tasks = () => (
  <TaskBar>
    <TaskSearch>
      <input type="text" placeholder="在这里输入你要搜索的内容" aria-label="搜索" />
      <SoccerArt />
    </TaskSearch>
    <TaskButton aria-label="Cortana"><Ring /></TaskButton>
    <TaskButton $gap={8} aria-label="任务视图"><TaskViewIcon /></TaskButton>
    <TaskButton $open $w={51} $gap={6} aria-label="Edge"><EdgeLogo /></TaskButton>
    <TaskButton $open $front $gap={5} aria-label="Word"><WordLogo /></TaskButton>
    <TaskButton $open $w={51} aria-label="PDF"><PdfLogo /></TaskButton>
    <Tray>
      <Weather><WeatherIcon /><span>30°C</span><span>微雨</span></Weather>
      <TrayButton aria-label="显示隐藏的图标"><Svg w={18} h={12}><path d="M1 10l8-8 8 8" stroke="#111" /></Svg></TrayButton>
      <TrayButton aria-label="云服务"><SwirlIcon /></TrayButton>
      <TrayButton aria-label="麦克风"><TrayMic /></TrayButton>
      <TrayButton aria-label="QQ"><PenguinIcon /></TrayButton>
      <TrayButton aria-label="网络"><WifiIcon /></TrayButton>
      <TrayButton aria-label="电脑管家"><ShieldIcon /></TrayButton>
      <TrayButton aria-label="电池"><BatteryIcon /></TrayButton>
      <TrayButton aria-label="音量"><SpeakerIcon /></TrayButton>
      <TrayButton><ImeMark>中</ImeMark></TrayButton>
      <TrayButton aria-label="搜狗输入法"><SogouIcon /></TrayButton>
      <Clock><span>17:05</span>2022/7/</Clock>
    </Tray>
  </TaskBar>
);

const App = () => (
  <Window>
    <GlobalStyle />
    <Header />
    <RibbonBar />
    <Document />
    <Status />
    <Tasks />
    <Banner>获取资料+QQ：1527198369</Banner>
    <ClickHalo><PointerIcon color="#222" /></ClickHalo>
    <Timer>00:00</Timer>
    <NetMeter>
      <div><Svg w={10} h={12}><path d="M5 11V2M1 6l4-4 4 4" stroke="#3fa4ee" strokeWidth="2" /></Svg><b>0</b>K/s</div>
      <div><Svg w={10} h={12}><path d="M5 1v9M1 6l4 4 4-4" stroke="#2fae4e" strokeWidth="2" /></Svg><b>0</b>K/s</div>
    </NetMeter>
  </Window>
);

export default App;
